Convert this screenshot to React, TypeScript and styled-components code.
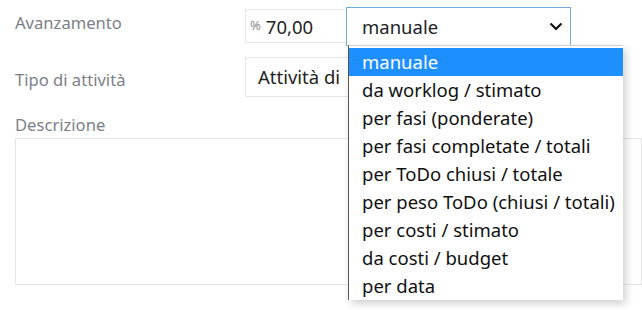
import styled, { createGlobalStyle } from "styled-components";

const GlobalStyle = createGlobalStyle`
    html, body {
        margin: 0;
        padding: 0;
        background: #fff;
        font-family: "Noto Sans", "Open Sans", sans-serif;
    }
`

const options = [
    "manuale",
    "da worklog / stimato",
    "per fasi (ponderate)",
    "per fasi completate / totali",
    "per ToDo chiusi / totale",
    "per peso ToDo (chiusi / totali)",
    "per costi / stimato",
    "da costi / budget",
    "per data",
];

const Chevron = () => (
    <svg width="14" height="9" viewBox="0 0 14 9">
        <path d="M1.5 1.5 L7 7 L12.5 1.5" fill="none" stroke="#111" strokeWidth="2.2" />
    </svg>
);

export default function App() {
    return (
        <>
            <GlobalStyle/>
            <Form>
                <Row>
                    <Label>Avanzamento</Label>
                    <Percent>
                        <PercentSign>%</PercentSign>
                        <Value>70,00</Value>
                    </Percent>
                    <SelectWrap>
                        <Select>
                            <span>manuale</span>
                            <Chevron/>
                        </Select>
                        <Dropdown>
                            {options.map((o, i) => (
                                <Option key={o} $active={i === 0}>{o}</Option>
                            ))}
                        </Dropdown>
                    </SelectWrap>
                </Row>
                <Row $gap={11}>
                    <Label $pt={12}>Tipo di attività</Label>
                    <TextBox>Attività di  progetto</TextBox>
                </Row>
                <Caption>Descrizione</Caption>
                <TextArea/>
            </Form>
        </>
    );
}

const Form = styled.div`
    padding: 7px 0 26px 15px;
    display: flex;
    flex-direction: column;
`

const Row = styled.div<{ $gap?: number }>`
    display: flex;
    align-items: flex-start;
    margin-top: ${p => p.$gap ?? 0}px;
`

const Label = styled.div<{ $pt?: number }>`
    width: 230px;
    padding-top: ${p => p.$pt ?? 5}px;
    font-size: 16.6px;
    line-height: 22px;
    color: #7b8088;
`

const Percent = styled.div`
    box-sizing: border-box;
    margin-top: 2px;
    width: 101px;
    height: 34px;
    border: 1px solid #e6e6e6;
    border-right: none;
    display: flex;
    align-items: center;
    padding-left: 4px;
    gap: 5px;
`

const PercentSign = styled.span`
    font-size: 13px;
    color: #8c8c8c;
    margin-top: -3px;
`

const Value = styled.span`
    font-size: 18.5px;
    color: #222;
`

const SelectWrap = styled.div`
    position: relative;
`

const Select = styled.div`
    box-sizing: border-box;
    width: 225px;
    height: 39px;
    border: 1px solid #72abdd;
    display: flex;
    align-items: center;
    justify-content: space-between;
    padding: 0 7px 0 15px;
    font-size: 18.5px;
    color: #222;
`

const Dropdown = styled.ul`
    position: absolute;
    top: 38px;
    left: 2px;
    z-index: 2;
    box-sizing: border-box;
    width: 275px;
    margin: 0;
    padding: 2px 0 0;
    list-style: none;
    background: #fff;
    border-top: 1px solid #cfcfcf;
    border-left: 1px solid #555;
    box-shadow: 3px 4px 8px rgba(0, 0, 0, 0.18);
`

const Option = styled.li<{ $active?: boolean }>`
    height: 28px;
    line-height: 28px;
    padding-left: 13px;
    font-size: 18.5px;
    white-space: pre;
    color: ${p => p.$active ? "#fff" : "#111"};
    background: ${p => p.$active ? "#1e8fff" : "transparent"};
`

const TextBox = styled.div`
    box-sizing: border-box;
    width: 326px;
    height: 40px;
    border: 1px solid #e6e6e6;
    padding-left: 12px;
    font-size: 18.5px;
    line-height: 38px;
    color: #222;
    white-space: pre;
    overflow: hidden;
`

const Caption = styled.div`
    margin-top: 17px;
    font-size: 16.6px;
    line-height: 22px;
    color: #7b8088;
`

const TextArea = styled.div`
    box-sizing: border-box;
    margin-top: 2px;
    width: 627px;
    height: 147px;
    border: 1px solid #e6e6e6;
`
